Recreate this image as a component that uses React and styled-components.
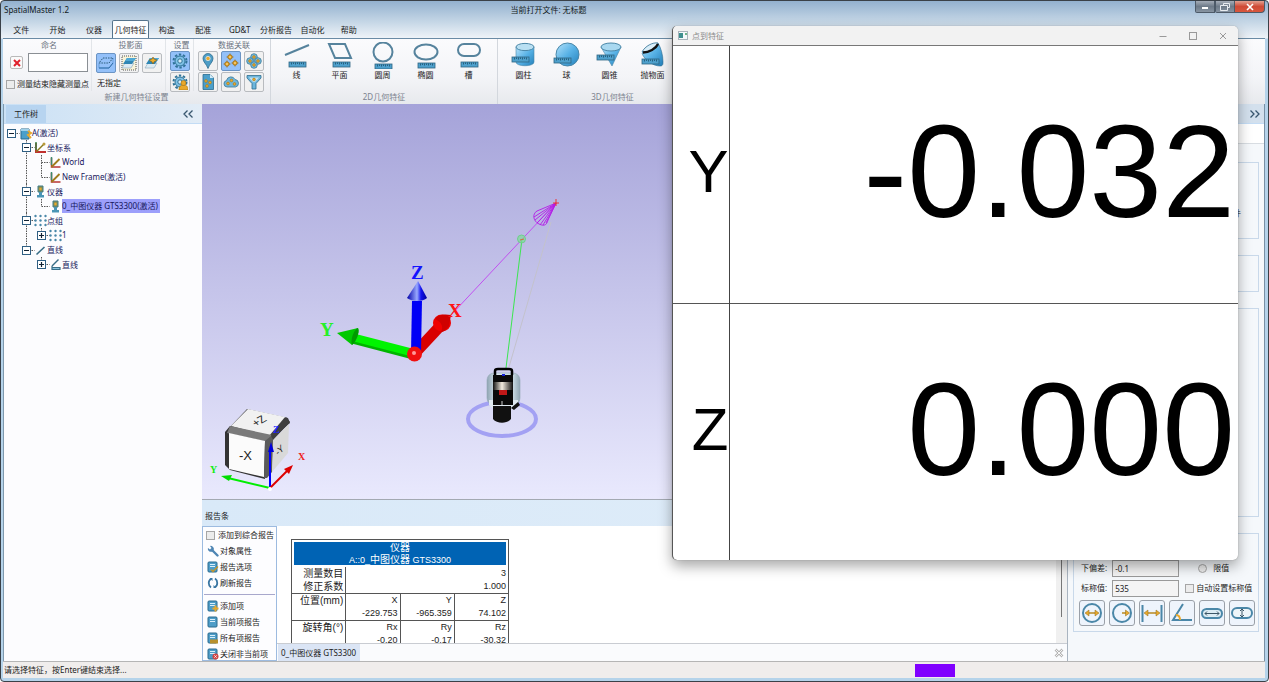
import styled, { createGlobalStyle, css } from "styled-components"

const GlobalStyle = createGlobalStyle`
  *,
  *::before,
  *::after {
    box-sizing: border-box;
  }
  body {
    margin: 0;
    font-family: "Noto Sans", "Noto Sans CJK SC", sans-serif;
    font-size: 8px;
    line-height: 12px;
    color: #1c1c1c;
  }
  button,
  input {
    font: inherit;
    color: inherit;
    margin: 0;
    padding: 0;
  }
  svg {
    display: block;
    flex: none;
  }
  ul {
    list-style: none;
    margin: 0;
    padding: 0;
  }
`

const BLUE = "#4a87a8"
const OUTLINE = "#56839d"
const GOLD = "#e9a92c"

/* ---------- small icons ---------- */

const Plane = ({ dashed, picked, star }) => (
  <svg width="16" height="16" viewBox="0 0 16 16">
    {dashed ? (
      <>
        <path d="M5 3h10l-4 5H1z" fill="none" stroke="#2d5d7c" strokeDasharray="1.5 1" />
        <path d="M1 8v5h10l4-5V3" fill="none" stroke="#4a87c8" strokeWidth=".6" />
        <path d="M1 13h10l4-5" fill="none" stroke="#2f6fa8" />
      </>
    ) : (
      <>
        {picked && <rect x="1" y="1" width="14" height="14" fill="#f8f3d8" stroke="#555" strokeDasharray="1 1" />}
        <path d="M4 8h9l-3 5H1z" fill="#dcebf4" stroke="#8aa6b8" strokeWidth=".6" />
        <path d="M6 3h9l-4 6H2z" fill="#2f86b4" />
        <path d="M6 3h9l-2 3H4z" fill="#4fa9d6" />
      </>
    )}
    {star && <path d="M9 2l1 2 3 1-3 2-1 2-1-2-3-2 3-1z" fill={GOLD} stroke="#7b5a12" strokeWidth=".6" />}
  </svg>
)

const Gear = ({ user }) => (
  <svg width="16" height="16" viewBox="0 0 16 16">
    <circle cx="8" cy="8" r="6.5" fill="none" stroke="#2f7397" strokeWidth="2" strokeDasharray="2.4 1.7" />
    <circle cx="8" cy="8" r="5" fill="#7fc2e6" stroke="#2f7397" />
    <circle cx="8" cy="8" r="2.2" fill="#d5ebf7" stroke="#2f7397" />
    {user && (
      <>
        <path d="M7 16c0-4 2-5 4.500-5s4.500 1 4.500 5z" fill={GOLD} stroke="#a87410" strokeWidth=".6" />
        <circle cx="11.5" cy="9" r="2.5" fill={GOLD} stroke="#a87410" strokeWidth=".6" />
      </>
    )}
  </svg>
)

const Dots = ({ at }) =>
  at.map(([x, y]) => <circle key={`${x}-${y}`} cx={x} cy={y} r="1.4" fill={GOLD} stroke="#9c6c10" strokeWidth=".5" />)

const PinIcon = () => (
  <svg width="16" height="16" viewBox="0 0 16 16">
    <path d="M8 15.500C6.500 11 3 9 3 5.500a5 5 0 0 1 10 0C13 9 9.500 11 8 15.500z" fill="#4d9dc6" stroke="#2f6d90" strokeWidth=".8" />
    <circle cx="8" cy="5.5" r="2.2" fill={GOLD} stroke="#d8e9f2" strokeWidth=".8" />
  </svg>
)

const TargetsIcon = () => (
  <svg width="16" height="16" viewBox="0 0 16 16" stroke="#9a6a12" strokeWidth=".8">
    {[[7, 4], [4, 11], [12, 10]].map(([x, y]) => (
      <g key={x}>
        <path d={`M${x - 3.5} ${y}h7M${x} ${y - 3.5}v7`} />
        <circle cx={x} cy={y} r="2.2" fill={GOLD} />
        <circle cx={x} cy={y} r=".7" fill="#fff3c4" stroke="none" />
      </g>
    ))}
  </svg>
)

const CloverIcon = () => (
  <svg width="16" height="16" viewBox="0 0 16 16">
    {[[8, 4], [4, 8], [12, 8], [8, 12]].map(([x, y]) => (
      <circle key={`${x}-${y}`} cx={x} cy={y} r="3.3" fill="#72bbdf" stroke="#3f7896" strokeWidth=".8" />
    ))}
    <Dots at={[[8, 4], [4, 8], [12, 8], [8, 12]]} />
  </svg>
)

const FileIcon = () => (
  <svg width="16" height="16" viewBox="0 0 16 16">
    <path d="M3 .5h7L13.500 4v11.500H3z" fill="#4b9fca" stroke="#2b6b8f" strokeWidth=".8" />
    <path d="M10 .5V4h3.500z" fill="#d5ecf8" />
    <Dots at={[[6, 7], [10, 8.5], [7, 12]]} />
  </svg>
)

const CloudIcon = () => (
  <svg width="16" height="16" viewBox="0 0 16 16">
    <path d="M4 13a3.300 3.300 0 0 1-.5-6.500A4.500 4.500 0 0 1 12 5.500 3.800 3.800 0 0 1 12.500 13z" fill="#6db6dc" stroke="#3f7896" strokeWidth=".8" />
    <Dots at={[[5, 9.5], [8.5, 6.5], [11.5, 10]]} />
  </svg>
)

const FunnelIcon = () => (
  <svg width="16" height="16" viewBox="0 0 16 16">
    <path d="M1 1.500h14V4L10 9.500V15H6V9.500L1 4z" fill="#6db6dc" stroke="#2f6d90" strokeWidth=".8" />
    <path d="M3 3.500h10L9 8H7z" fill="#c4e3f2" />
    <Dots at={[[8, 5.5]]} />
  </svg>
)

/* the ruler that sits under (or in front of) every feature icon */
const Ruler = ({ x, y }) => (
  <g transform={`translate(${x} ${y})`}>
    <rect width="17" height="5" fill="#4ea0cc" stroke="#2f6583" strokeWidth=".8" />
    <path d="M2.500 .5v2M4.500 .5v1.500M6.500 .5v2M8.500 .5v1.500M10.500 .5v2M12.500 .5v1.500M14.500 .5v2" stroke="#18465f" strokeWidth=".7" />
  </g>
)

const Solid = () => (
  <defs>
    <linearGradient id="solid" x1="0" y1="0" x2="1" y2="1">
      <stop offset="0" stopColor="#b6e2fa" />
      <stop offset=".5" stopColor="#58b2e6" />
      <stop offset="1" stopColor="#2380ba" />
    </linearGradient>
  </defs>
)

const featureShapes = {
  line: (
    <>
      <path d="M3 13L27 3" stroke={OUTLINE} strokeWidth="2" />
      <Ruler x={7} y={20} />
    </>
  ),
  plane: (
    <>
      <path d="M4 2h16l6 14H10z" fill="none" stroke={OUTLINE} strokeWidth="2" />
      <Ruler x={8} y={20} />
    </>
  ),
  circle: (
    <>
      <circle cx="15" cy="10" r="9.5" fill="none" stroke={OUTLINE} strokeWidth="2" />
      <Ruler x={7} y={22} />
    </>
  ),
  ellipse: (
    <>
      <ellipse cx="15" cy="10" rx="11.5" ry="7.5" fill="none" stroke={OUTLINE} strokeWidth="2" />
      <Ruler x={7} y={21} />
    </>
  ),
  slot: (
    <>
      <rect x="4" y="2" width="22" height="12" rx="6" fill="none" stroke={OUTLINE} strokeWidth="2" />
      <Ruler x={7} y={20} />
    </>
  ),
  cylinder: (
    <>
      <path d="M7 5v15c0 5 18 5 18 0V5z" fill="url(#solid)" stroke={BLUE} strokeWidth=".6" />
      <ellipse cx="16" cy="5" rx="9" ry="3.6" fill="#b9dff2" stroke={BLUE} />
      <Ruler x={3} y={15} />
    </>
  ),
  sphere: (
    <>
      <circle cx="15.5" cy="12.5" r="11.5" fill="url(#solid)" stroke={BLUE} />
      <Ruler x={2} y={16} />
    </>
  ),
  cone: (
    <>
      <path d="M6 5l11 19 9-19z" fill="url(#solid)" stroke={BLUE} strokeWidth=".6" />
      <ellipse cx="16" cy="5" rx="10" ry="4" fill="#a9d8f0" stroke={BLUE} />
      <Ruler x={2} y={13} />
    </>
  ),
  paraboloid: (
    <>
      <path d="M4 11c2 7 11 13 18 13 3 0 3-2 3-4 0-7-2-14-5-19z" fill="url(#solid)" stroke="#2f6d90" strokeWidth=".6" />
      <path d="M4 10C7 4 15 0 20 1c0 5-9 10-16 9z" fill="#d8edf8" stroke="#2f6d90" strokeWidth=".8" />
      <path d="M5 10.500c6 0 13-4 15-8.500" stroke="#111" strokeWidth="2.4" fill="none" />
      <Ruler x={4} y={17} />
    </>
  ),
}

/* ---------- data ---------- */

const menuTabs = ["文件", "开始", "仪器", "几何特征", "构造", "配准", "GD&T", "分析报告", "自动化", "帮助"]

const features2d = [
  ["line", "线"],
  ["plane", "平面"],
  ["circle", "圆周"],
  ["ellipse", "椭圆"],
  ["slot", "槽"],
]

const features3d = [
  ["cylinder", "圆柱"],
  ["sphere", "球"],
  ["cone", "圆锥"],
  ["paraboloid", "抛物面"],
]

// guides: one character per column left of the icon
// " " empty, "|" passing line, "t" branch, "l" last branch, "r" root
const treeRows = [
  { guides: "r", box: "-", icon: "project", text: "A(激活)" },
  { guides: " t", box: "-", icon: "frames", text: "坐标系" },
  { guides: " |t", icon: "frame", text: "World" },
  { guides: " |l", icon: "frame", text: "New Frame(激活)" },
  { guides: " t", box: "-", icon: "device", text: "仪器" },
  { guides: " |l", icon: "device", text: "0_中图仪器 GTS3300(激活)", selected: true },
  { guides: " t", box: "-", icon: "points", text: "点组" },
  { guides: " |l", box: "+", icon: "points", text: "1" },
  { guides: " l", box: "-", icon: "lineItem", text: "直线" },
  { guides: "  l", box: "+", icon: "angle", text: "直线" },
]

const treeIcons = {
  project: (
    <>
      <path d="M2 2h8v10H2z" fill="#4b9fca" stroke="#2b6b8f" />
      <path d="M2 2h8v2H2z" fill="#9fd0ea" />
      <path d="M9 4l3 2-3 2 3 3" stroke={GOLD} strokeWidth="2" fill="none" />
    </>
  ),
  frames: (
    <>
      <path d="M2 2v9h10" stroke="#c03030" strokeWidth="2" fill="none" />
      <path d="M2 11l8-8" stroke="#8a7a1c" strokeWidth="1.5" />
      <path d="M2 1v8" stroke="#3d8a4d" strokeWidth="1.5" />
      <circle cx="10" cy="3" r="1.5" fill="#b99a3a" />
    </>
  ),
  frame: (
    <>
      <path d="M2.500 2v9h9" stroke="#b83434" strokeWidth="1.5" fill="none" />
      <path d="M2.500 11l8-8" stroke="#a07c1c" strokeWidth="1.8" />
      <path d="M2.500 1v8" stroke="#3d8a6d" strokeWidth="1.5" />
    </>
  ),
  device: (
    <>
      <path d="M4 1h5v6H4z" fill="#8c8f52" stroke="#3f7d88" />
      <path d="M5 7h3v3H5zM3 10h7v2.500H3z" fill="#4a95b5" />
      <circle cx="6.5" cy="4" r="1.2" fill={GOLD} />
    </>
  ),
  points: [2, 6.5, 11].flatMap((y) =>
    [1.5, 6.5, 11.5].map((x) => <circle key={`${x}-${y}`} cx={x} cy={y} r="1.2" fill={BLUE} />)
  ),
  lineItem: <path d="M2.500 10.500L10.500 3" stroke="#386d86" strokeWidth="1.6" />,
  angle: (
    <>
      <path d="M9.500 1.500L3 8" stroke="#386d86" strokeWidth="1.4" />
      <path d="M3 8v3.500h8V9.500H3" stroke="#386d86" strokeWidth="1.2" fill="#8ac4e0" />
    </>
  ),
}

const Guide = ({ kind, box }) => (
  <svg width="15" height="15" viewBox="0 0 15 15" overflow="visible">
    <g stroke="#555" strokeDasharray="1.5 1">
      {(kind === "|" || kind === "t") && <path d="M7.500 0v15" />}
      {kind === "l" && <path d="M7.500 0v7.500" />}
      {kind !== "|" && kind !== " " && <path d="M7.500 7.500h8" />}
    </g>
    {box && (
      <g stroke="#2f5f83">
        <rect x="3.5" y="3.5" width="8" height="8" fill="#fff" />
        <path d={box === "+" ? "M5 7.500h5M7.500 5v5" : "M5 7.500h5"} stroke="#123" strokeWidth="1.2" />
      </g>
    )}
  </svg>
)

const sheet = (
  <>
    <rect x="1" y="1" width="9" height="10" rx="1" fill="#4e9dc8" stroke="#2b6b8f" />
    <path d="M3 3.500h5M3 5.500h5" stroke="#d9eefa" />
  </>
)

const reportIcons = {
  wrench: (
    <>
      <path d="M5 5l5.500 5.500" stroke="#4f86b4" strokeWidth="2.4" strokeLinecap="round" />
      <path d="M1 3l2 1.500L4.500 3 3 1a3 3 0 1 1-2 2z" fill="#4f86b4" />
    </>
  ),
  options: (
    <>
      {sheet}
      <path d="M4 8.500l2 2 5-5" stroke="#c4942a" strokeWidth="1.5" fill="none" />
    </>
  ),
  refresh: (
    <>
      <path d="M4 2C1 3.500 1 8.500 4 10.500M8 10C11 8.500 11 3.500 8 1.500" stroke="#3a76a2" strokeWidth="1.8" fill="none" />
      <path d="M2.500 1h3v3zM9.500 11h-3V8z" fill="#3a76a2" />
    </>
  ),
  add: (
    <>
      {sheet}
      <path d="M8.500 5.500v6M5.500 8.500h6" stroke={GOLD} strokeWidth="2" />
    </>
  ),
  current: sheet,
  all: (
    <>
      {sheet}
      <rect x="3" y="7.5" width="8" height="4" fill="#b8902c" />
    </>
  ),
  close: (
    <>
      {sheet}
      <circle cx="8.5" cy="8.5" r="3" fill="#d24545" />
      <path d="M7.300 7.300l2.400 2.400M9.700 7.300L7.300 9.700" stroke="#fff" strokeWidth=".8" />
    </>
  ),
}

const measureIcons = {
  diameter: (
    <>
      <circle cx="11" cy="11" r="9" fill="none" stroke={BLUE} strokeWidth="2" />
      <path d="M6 11h10" stroke="#b98a20" strokeWidth="1.6" />
      <path d="M4 11l4-3v6zM18 11l-4-3v6z" fill={GOLD} stroke="#8d6a18" strokeWidth=".5" />
    </>
  ),
  radius: (
    <>
      <circle cx="11" cy="11" r="9" fill="none" stroke={BLUE} strokeWidth="2" />
      <path d="M11 11h5" stroke="#b98a20" strokeWidth="1.6" />
      <path d="M18.500 11l-4-3v6z" fill={GOLD} stroke="#8d6a18" strokeWidth=".5" />
    </>
  ),
  distance: (
    <>
      <path d="M1.500 3v17M20.500 3v17" stroke={BLUE} strokeWidth="2" />
      <path d="M6 11h10" stroke="#b98a20" strokeWidth="1.6" />
      <path d="M3 11l4-3v6zM19 11l-4-3v6z" fill={GOLD} stroke="#8d6a18" strokeWidth=".5" />
    </>
  ),
  angle: (
    <>
      <path d="M12 2L2 18h19" fill="none" stroke={BLUE} strokeWidth="2" />
      <path d="M5 13c3 0 4 2 4 5" stroke={GOLD} strokeWidth="2" fill="none" />
    </>
  ),
  slotLength: (
    <>
      <rect x="1" y="7" width="20" height="9" rx="4.5" fill="#dcecf4" stroke={BLUE} strokeWidth="2" />
      <path d="M4 11.500h14M6 9.500l-2 2 2 2M16 9.500l2 2-2 2" stroke="#3c5666" fill="none" />
    </>
  ),
  slotWidth: (
    <>
      <rect x="1" y="6" width="20" height="10" rx="5" fill="#eef5f9" stroke={BLUE} strokeWidth="2" />
      <path d="M11 7v8M9 9l2-2 2 2M9 13l2 2 2-2" stroke="#3c5666" fill="none" />
    </>
  ),
}

const reportTools = [
  ["wrench", "对象属性"],
  ["options", "报告选项"],
  ["refresh", "刷新报告"],
]

const reportItems = [
  ["add", "添加项"],
  ["current", "当前项报告"],
  ["all", "所有项报告"],
  ["close", "关闭非当前项"],
]

/* ---------- 3D view ---------- */

const Scene = () => (
  <SceneSvg width="470" height="396" viewBox="202 104 470 396">
    <defs>
      <linearGradient id="blueCone">
        <stop offset="0" stopColor="#00a" />
        <stop offset=".5" stopColor="#9aaaff" />
        <stop offset=".7" stopColor="#11e" />
        <stop offset="1" stopColor="#009" />
      </linearGradient>
      <linearGradient id="lens">
        <stop offset="0" stopColor="#111" />
        <stop offset=".45" stopColor="#f3ece0" />
        <stop offset="1" stopColor="#111" />
      </linearGradient>
      <linearGradient id="shell">
        <stop offset="0" stopColor="#8fa5b3" />
        <stop offset=".3" stopColor="#dbe8f0" />
        <stop offset=".8" stopColor="#c5d6e0" />
        <stop offset="1" stopColor="#90a6b4" />
      </linearGradient>
    </defs>

    {/* measured line */}
    <path d="M452 314L556 203" stroke="#c050f0" />
    <path d="M551 222L509 367" stroke="#c3c2cc" />
    <path d="M522 239L506 368" stroke="#3be650" />
    <circle cx="521.5" cy="239" r="4" fill="#7fdc9a" fillOpacity=".7" stroke="#6fcf8c" />
    <path d="M520 240l4-1" stroke="#d66a3a" />
    <g stroke="#b31ae6" strokeWidth=".9" fill="none">
      <path d="M556 203L537 211C532 214 533 221 539 224s8 0 9-4z" />
      <path d="M556 203l-22 14M556 203l-21 17M556 203l-19 20M556 203l-16 22M556 203l-13 22M556 203l-10 20" />
    </g>
    <path d="M553 203h6M556 199v7" stroke="#e33" />

    {/* coordinate frame */}
    <path d="M413 355L352 339" stroke="#00b400" strokeWidth="9" />
    <path d="M414 353L352 337" stroke="#00f400" strokeWidth="8" />
    <path d="M337 333l21-5c2 4-2 14-6 17z" fill="#00c800" />
    <path d="M352 345c4-3 8-13 6-17-4 1-8 12-6 17z" fill="#009a00" />
    <path d="M416 352l27-29" stroke="#d90000" strokeWidth="11" />
    <ellipse cx="442" cy="323" rx="9" ry="8.5" fill="#f00000" />
    <path d="M435 319c4-5 10-5 16-4l-2 11c-4 5-6 6-8 6 3-6 0-10-6-13z" fill="#d00000" />
    <path d="M416 352l1-51" stroke="#0000f6" strokeWidth="10" />
    <path d="M418 281l9 17c-4 4-15 4-20 0z" fill="url(#blueCone)" />
    <circle cx="414.5" cy="354" r="7.5" fill="#f01010" />
    <circle cx="414" cy="353" r="2" fill="#ff9a9a" />
    <AxisText x="411" y="279" fill="#1414ff">Z</AxisText>
    <AxisText x="448" y="317" fill="#ff1414">X</AxisText>
    <AxisText x="320" y="336" fill="#28f028">Y</AxisText>

    {/* laser tracker */}
    <ellipse cx="502" cy="419" rx="34" ry="17" fill="none" stroke="#a3a1f3" strokeWidth="4" />
    <rect x="487" y="373" width="33" height="32" rx="7" fill="url(#shell)" stroke="#93a8b5" strokeWidth=".6" />
    <path d="M489 400h29v5l-4 4h-20l-5-4z" fill="#dfe9f0" />
    <path d="M495 375v-4q0-2 3-2h11q3 0 3 2v4" fill="none" stroke="#000" strokeWidth="2.5" />
    <path d="M493 375h20v30h-20z" fill="#0a0a0a" />
    <path d="M493 382h20v8h-20z" fill="url(#lens)" />
    <path d="M499 390h8v5h-8z" fill="#c01818" />
    <path d="M502 401v4" stroke="#ccc" />
    <path d="M493 406h18v13c-4 5-14 5-18 0z" fill="#111" />
    <path d="M511 408l7-6 2 3-6 5z" fill="#111" />
    <path d="M502 374h3v2h-3z" fill="#1520d8" />

    {/* view cube */}
    <g strokeLinejoin="round">
      <path d="M225 432l5-6 38 10-3 43-35-9-5-5z" fill="#333" />
      <path d="M229 428l18-19 41 9 2 5-20 18z" fill="#444" />
      <path d="M231 426l17-17 37 8-16 19z" fill="#f1f1f1" />
      <path d="M227 433l3-7 42 9-4 7z" fill="#7a7a7a" />
      <path d="M229 433l36 8-1 36-35-8z" fill="#fbfbfb" />
      <path d="M265 441l6-5 3 5-2 31-5 6h-3z" fill="#5b5b5b" />
      <path d="M273 440l16-16-1 29-16 19z" fill="#d9d9d9" />
      <path d="M271 435l15-18 4 5-17 18z" fill="#3f3f3f" />
    </g>
    <CubeText x="239" y="460" fontSize="13">-X</CubeText>
    <CubeText fontSize="11" transform="translate(256 427) rotate(-30) skewX(15)">+Z</CubeText>
    <CubeText fontSize="9" transform="translate(278 456) rotate(-45) skewX(-15)">-Y</CubeText>
    <path d="M270 488V449" stroke="#00f" strokeWidth="2" />
    <path d="M271 442l3 10h-6z" fill="#00d" />
    <path d="M270 488l-42-10" stroke="#0e0" strokeWidth="2" />
    <path d="M221 476l11-1-3 6z" fill="#0d0" />
    <path d="M270 488l18-18" stroke="#d00" strokeWidth="2" />
    <path d="M293 465l-4 9-5-5z" fill="#d00" />
    <circle cx="270" cy="489" r="2" fill="#fff" />
    <SmallAxis x="273" y="433" fill="#22f">Z</SmallAxis>
    <SmallAxis x="298" y="460" fill="#e22">X</SmallAxis>
    <SmallAxis x="210" y="473" fill="#1e1">Y</SmallAxis>
  </SceneSvg>
)

/* ---------- parts ---------- */

const Ribbon = () => (
  <RibbonBar>
    <RibbonSection $width={268}>
      <RibbonBody>
        <Group $width={89}>
          <GroupTitle>命名</GroupTitle>
          <NameRow>
            <ClearButton type="button" aria-label="清除">
              <svg width="8" height="8" viewBox="0 0 8 8">
                <path d="M1 1l6 6M7 1L1 7" stroke="#e0202c" strokeWidth="2" />
              </svg>
            </ClearButton>
            <NameInput type="text" aria-label="命名" />
          </NameRow>
          <CheckLabel>
            <Check type="checkbox" />
            测量结束隐藏测量点
          </CheckLabel>
        </Group>
        <Group $width={74}>
          <GroupTitle>投影面</GroupTitle>
          <ButtonGrid $cols={3} $top>
            <ToolButton type="button" aria-label="无投影面" $active><Plane dashed /></ToolButton>
            <ToolButton type="button" aria-label="选择平面"><Plane picked /></ToolButton>
            <ToolButton type="button" aria-label="新建平面"><Plane star /></ToolButton>
          </ButtonGrid>
          <PlaneName>无指定</PlaneName>
        </Group>
        <Group $width={28}>
          <GroupTitle>设置</GroupTitle>
          <ButtonGrid $cols={1}>
            <ToolButton type="button" aria-label="设置" $active><Gear /></ToolButton>
            <ToolButton type="button" aria-label="用户设置"><Gear user /></ToolButton>
          </ButtonGrid>
        </Group>
        <Group $width={76}>
          <GroupTitle>数据关联</GroupTitle>
          <ButtonGrid $cols={3}>
            <ToolButton type="button" aria-label="定位点"><PinIcon /></ToolButton>
            <ToolButton type="button" aria-label="目标点" $active><TargetsIcon /></ToolButton>
            <ToolButton type="button" aria-label="点组"><CloverIcon /></ToolButton>
            <ToolButton type="button" aria-label="文件"><FileIcon /></ToolButton>
            <ToolButton type="button" aria-label="点云"><CloudIcon /></ToolButton>
            <ToolButton type="button" aria-label="过滤"><FunnelIcon /></ToolButton>
          </ButtonGrid>
        </Group>
      </RibbonBody>
      <Caption>新建几何特征设置</Caption>
    </RibbonSection>
    <FeatureSection width={227} items={features2d} caption="2D几何特征" />
    <FeatureSection width={230} items={features3d} caption="3D几何特征" />
  </RibbonBar>
)

const FeatureSection = ({ width, items, caption }) => (
  <RibbonSection $width={width}>
    <FeatureBody>
      {items.map(([shape, label]) => (
        <Feature key={shape} type="button">
          <svg width="30" height="27" viewBox="0 0 30 27">
            <Solid />
            {featureShapes[shape]}
          </svg>
          {label}
        </Feature>
      ))}
    </FeatureBody>
    <Caption>{caption}</Caption>
  </RibbonSection>
)

const WorkTree = () => (
  <TreePanel>
    <PanelHead>
      <HeadTab>工作树</HeadTab>
      <Chevron type="button" aria-label="收起">
        <svg width="12" height="8" viewBox="0 0 12 8">
          <path d="M5.500 .5L2 4l3.500 3.500M10.500 .5L7 4l3.500 3.500" fill="none" stroke="#38566e" strokeWidth="1.3" />
        </svg>
      </Chevron>
    </PanelHead>
    <Tree>
      {treeRows.map(({ guides, box, icon, text, selected }, i) => (
        <TreeRow key={i}>
          {guides.split("").map((kind, n) => (
            <Guide key={n} kind={kind} box={n === guides.length - 1 ? box : undefined} />
          ))}
          <svg width="13" height="13" viewBox="0 0 13 13" overflow="visible">
            {treeIcons[icon]}
          </svg>
          <TreeText $selected={selected}>{text}</TreeText>
        </TreeRow>
      ))}
    </Tree>
  </TreePanel>
)

const ReportTool = ({ icon, text }) => (
  <ReportButton type="button">
    <svg width="12" height="12" viewBox="0 0 12 12">
      {reportIcons[icon]}
    </svg>
    {text}
  </ReportButton>
)

const Report = () => (
  <ReportPanel>
    <ReportHead>报告条</ReportHead>
    <ReportMain>
      <ReportSide>
        <CheckLabel $side>
          <Check type="checkbox" />
          添加到综合报告
        </CheckLabel>
        {reportTools.map(([icon, text]) => (
          <ReportTool key={icon} icon={icon} text={text} />
        ))}
        <Divider />
        {reportItems.map(([icon, text]) => (
          <ReportTool key={icon} icon={icon} text={text} />
        ))}
      </ReportSide>
      <ReportView>
        <ReportScroll>
          <ReportPage>
            <ReportTable>
              <caption>
                <big>仪器</big>
                <br />
                A::0_<big>中图仪器</big> GTS3300
              </caption>
              <tbody>
                <tr>
                  <th scope="row">测量数目</th>
                  <td colSpan="3">3</td>
                </tr>
                <tr>
                  <th scope="row">修正系数</th>
                  <td colSpan="3">1.000</td>
                </tr>
                <tr className="line">
                  <th scope="row">位置(mm)</th>
                  <td>X</td>
                  <td>Y</td>
                  <td>Z</td>
                </tr>
                <tr>
                  <th />
                  <td>-229.753</td>
                  <td>-965.359</td>
                  <td>74.102</td>
                </tr>
                <tr className="line">
                  <th scope="row">旋转角(°)</th>
                  <td>Rx</td>
                  <td>Ry</td>
                  <td>Rz</td>
                </tr>
                <tr>
                  <th />
                  <td>-0.20</td>
                  <td>-0.17</td>
                  <td>-30.32</td>
                </tr>
              </tbody>
            </ReportTable>
          </ReportPage>
          <ScrollTrack>
            <ScrollThumb />
          </ScrollTrack>
        </ReportScroll>
        <ReportTabs>
          <ReportTab type="button">0_中图仪器 GTS3300</ReportTab>
          <CloseTab type="button" aria-label="关闭">
            <svg width="10" height="10" viewBox="0 0 10 10">
              <path d="M1.500 1.500l7 7M8.500 1.500l-7 7" stroke="#b4b4b4" strokeWidth="2.6" />
              <path d="M1.500 1.500l7 7M8.500 1.500l-7 7" stroke="#f6f6f6" />
            </svg>
          </CloseTab>
        </ReportTabs>
      </ReportView>
    </ReportMain>
  </ReportPanel>
)

const Properties = () => (
  <SidePanel>
    <PanelHead $right>
      <Chevron type="button" aria-label="展开">
        <svg width="12" height="8" viewBox="0 0 12 8">
          <path d="M1.500 .5L5 4 1.500 7.500M6.500 .5L10 4 6.500 7.500" fill="none" stroke="#38566e" strokeWidth="1.3" />
        </svg>
      </Chevron>
    </PanelHead>
    <SideStrip />
    <SideBody>
      <Box $height={77}>
        <BoxNote>件</BoxNote>
      </Box>
      <Box $height={37} />
      <Box $height={209} />
      <Box $height={99}>
        <Field>
          <label htmlFor="lower">下偏差:</label>
          <FieldInput id="lower" type="text" defaultValue="-0.1" />
          <Option $radio>
            <Radio type="radio" name="limit" />
            限值
          </Option>
        </Field>
        <Field>
          <label htmlFor="nominal">标称值:</label>
          <FieldInput id="nominal" type="text" defaultValue="535" />
          <Option>
            <Check type="checkbox" />
            自动设置标称值
          </Option>
        </Field>
        <Measures>
          {Object.entries(measureIcons).map(([name, icon]) => (
            <MeasureButton key={name} type="button" aria-label={name}>
              <svg width="22" height="22" viewBox="0 0 22 22">
                {icon}
              </svg>
            </MeasureButton>
          ))}
        </Measures>
      </Box>
    </SideBody>
  </SidePanel>
)

const PointDialog = () => (
  <Dialog role="dialog" aria-label="点到特征">
    <DialogBar>
      <svg width="10" height="9" viewBox="0 0 10 9">
        <rect x=".5" y=".5" width="9" height="8" fill="#f4f8fa" stroke="#a9b4bc" />
        <path d="M1 2h4v5H1z" fill="#3f8f8f" />
        <path d="M7 2h2v2H7z" fill="#6fb58a" />
      </svg>
      <DialogTitle>点到特征</DialogTitle>
      <DialogButton type="button" aria-label="最小化">
        <svg width="8" height="8" viewBox="0 0 8 8"><path d="M.5 4.500h7" stroke="#999" /></svg>
      </DialogButton>
      <DialogButton type="button" aria-label="最大化">
        <svg width="8" height="8" viewBox="0 0 8 8"><rect x=".5" y=".5" width="7" height="7" fill="none" stroke="#999" /></svg>
      </DialogButton>
      <DialogButton type="button" aria-label="关闭">
        <svg width="8" height="8" viewBox="0 0 8 8"><path d="M1 1l6 6M7 1L1 7" stroke="#999" /></svg>
      </DialogButton>
    </DialogBar>
    <Readout>
      <tbody>
        <tr>
          <th scope="row">Y</th>
          <td>-0.032</td>
        </tr>
        <tr>
          <th scope="row">Z</th>
          <td>0.000</td>
        </tr>
      </tbody>
    </Readout>
  </Dialog>
)

const App = () => (
  <>
    <GlobalStyle />
    <Window>
      <TitleBar>
        <AppName>SpatialMaster 1.2</AppName>
        <FileName>当前打开文件: 无标题</FileName>
        <WindowButtons>
          <WindowButton type="button" aria-label="最小化">
            <svg width="8" height="8" viewBox="0 0 8 8"><path d="M1 5h6" stroke="#fff" strokeWidth="2" /></svg>
          </WindowButton>
          <WindowButton type="button" aria-label="还原">
            <svg width="10" height="8" viewBox="0 0 10 8">
              <path d="M3.500 2.500v-2h6v4h-2M.5 2.500h7v5h-7z" fill="none" stroke="#e8ecf0" />
            </svg>
          </WindowButton>
          <WindowButton type="button" aria-label="关闭" $close>
            <svg width="8" height="8" viewBox="0 0 8 8"><path d="M1 1l6 6M7 1L1 7" stroke="#fff" strokeWidth="1.6" /></svg>
          </WindowButton>
        </WindowButtons>
      </TitleBar>
      <Tabs>
        {menuTabs.map((tab) => (
          <Tab key={tab} type="button" $active={tab === "几何特征"}>
            {tab}
          </Tab>
        ))}
      </Tabs>
      <Ribbon />
      <Main>
        <WorkTree />
        <Center>
          <View>
            <Scene />
          </View>
          <Report />
        </Center>
        <Properties />
      </Main>
      <StatusBar>
        请选择特征，按Enter键结束选择...
        <Progress />
      </StatusBar>
    </Window>
    <PointDialog />
  </>
)

export default App

/* ---------- styles ---------- */

const Window = styled.div`
  display: flex;
  flex-direction: column;
  height: 100vh;
  overflow: hidden;
  padding: 0 3px 3px 2px;
  border: 1px solid #3a4148;
  border-radius: 4px;
  background: linear-gradient(#93b1cf, #c3d5e5 20px, #eef3f8 37px, #b5d3ea 38px);
`

const TitleBar = styled.header`
  display: flex;
  align-items: flex-start;
  height: 18px;
  color: #101820;
`

const AppName = styled.div`
  flex: 1;
  padding: 3px 0 0 1px;
`

const FileName = styled.div`
  padding-top: 3px;
`

const WindowButtons = styled.div`
  flex: 1;
  display: flex;
  justify-content: flex-end;
  margin-left: 172px;
`

const WindowButton = styled.button`
  display: flex;
  align-items: center;
  justify-content: center;
  width: ${(p) => (p.$close ? 30 : 20)}px;
  height: 12px;
  border: 1px solid #4d5a68;
  border-top: none;
  border-left-width: ${(p) => (p.$close ? 0 : 1)}px;
  border-radius: ${(p) => (p.$close ? "0 0 4px 0" : "0 0 0 2px")};
  background: ${(p) =>
    p.$close ? "linear-gradient(#e3a090, #cf4a36 50%, #d8573e)" : "linear-gradient(#a5adb8, #6d7a88 50%, #8794a2)"};
`

const Tabs = styled.nav`
  display: flex;
  width: 364px;
  height: 19px;
  padding-top: 1px;
`

const Tab = styled.button`
  flex: 1 1 0;
  min-width: 0;
  border: 1px solid transparent;
  border-bottom: none;
  background: none;
  white-space: nowrap;
  ${(p) =>
    p.$active &&
    css`
      border-color: #54738c;
      border-radius: 2px 2px 0 0;
      background: #fcfdfe;
    `}
`

const RibbonBar = styled.div`
  display: flex;
  height: 66px;
  border-top: 1px solid #6a8ba5;
  background: linear-gradient(#fbfbfd, #f3f4f7 60%, #e7e9ed);
`

const RibbonSection = styled.section`
  display: flex;
  flex: none;
  flex-direction: column;
  width: ${(p) => p.$width}px;
  border-right: 1px solid #d3d7dd;
`

const RibbonBody = styled.div`
  display: flex;
  height: 52px;
`

const Group = styled.div`
  display: flex;
  flex: none;
  flex-direction: column;
  width: ${(p) => p.$width}px;
  border-right: 1px solid #e2e5e9;
  &:last-child {
    border-right: none;
  }
`

const GroupTitle = styled.div`
  padding-left: 4px;
  text-align: center;
  color: #6c7480;
`

const Caption = styled.div`
  text-align: center;
  color: #7c838f;
`

const NameRow = styled.div`
  display: flex;
  align-items: center;
  gap: 5px;
  padding: 2px 0 0 7px;
`

const ClearButton = styled.button`
  display: flex;
  align-items: center;
  justify-content: center;
  width: 13px;
  height: 13px;
  border: 1px solid #b9b9b9;
  border-radius: 2px;
  background: #fafafa;
`

const NameInput = styled.input`
  width: 60px;
  height: 19px;
  border: 1px solid #8a8f94;
  background: #fff;
`

const Check = styled.input`
  appearance: none;
  flex: none;
  width: 9px;
  height: 9px;
  border: 1px solid #a6a6a6;
  background: #ececec;
`

const Radio = styled(Check)`
  border-radius: 50%;
`

const CheckLabel = styled.label`
  display: flex;
  align-items: center;
  gap: ${(p) => (p.$side ? 3 : 2)}px;
  height: 16px;
  padding-left: 3px;
  margin-top: ${(p) => (p.$side ? 0 : 5)}px;
  white-space: nowrap;
`

const ButtonGrid = styled.div`
  display: grid;
  grid-template-columns: repeat(${(p) => p.$cols}, 20px);
  gap: 1px 3px;
  padding: ${(p) => (p.$top ? 2 : 0)}px 0 0 4px;
`

const ToolButton = styled.button`
  display: flex;
  align-items: center;
  justify-content: center;
  width: 20px;
  height: 20px;
  border: 1px solid ${(p) => (p.$active ? "#6b94c4" : "#b8bbbf")};
  border-radius: 2px;
  background: ${(p) => (p.$active ? "#93c0f9" : "#f1f1f1")};
`

const PlaneName = styled.div`
  padding: 4px 0 0 5px;
`

const FeatureBody = styled.div`
  display: flex;
  height: 52px;
  padding: 3px 0 0 4px;
`

const Feature = styled.button`
  display: flex;
  flex-direction: column;
  align-items: center;
  justify-content: flex-start;
  width: 43px;
  height: 40px;
  border: none;
  background: none;
`

const Main = styled.main`
  display: flex;
  flex: 1;
  min-height: 0;
`

const TreePanel = styled.aside`
  width: 199px;
  background: #fcfcfe;
  border-left: 1px solid #7f99ad;
`

const PanelHead = styled.div`
  display: flex;
  align-items: center;
  justify-content: ${(p) => (p.$right ? "flex-end" : "space-between")};
  height: 20px;
  padding: 0 ${(p) => (p.$right ? 1 : 6)}px 0 2px;
  background: ${(p) => (p.$right ? "#d3e0ed" : "linear-gradient(90deg, #cbe1f5, #e2ecf6)")};
  border-bottom: 1px solid #c3dcf5;
`

const HeadTab = styled.div`
  padding: 3px 8px;
  background: #b7d4f0;
`

const Chevron = styled.button`
  padding: 2px;
  border: none;
  background: none;
`

const Tree = styled.ul`
  display: flex;
  flex-direction: column;
  height: 146px;
  margin-top: 2px;
`

const TreeRow = styled.li`
  display: flex;
  flex: 1;
  min-height: 0;
  align-items: center;
`

const TreeText = styled.span`
  padding: 1px 2px 1px 0;
  white-space: nowrap;
  color: #16165c;
  background: ${(p) => (p.$selected ? "#9c9ffb" : "none")};
`

const Center = styled.div`
  display: flex;
  flex: 1;
  flex-direction: column;
  min-width: 0;
`

const View = styled.div`
  flex: 1;
  min-height: 0;
  overflow: hidden;
  background: linear-gradient(#a5a3d9, #e9e9fd);
`

const SceneSvg = styled.svg`
  overflow: visible;
`

const AxisText = styled.text`
  font-family: "Liberation Serif", serif;
  font-size: 19px;
  font-weight: 700;
`

const SmallAxis = styled.text`
  font-family: "Liberation Serif", serif;
  font-size: 10px;
  font-weight: 700;
`

const CubeText = styled.text`
  font-family: "Liberation Sans", sans-serif;
  fill: #222;
`

const ReportPanel = styled.section`
  display: flex;
  flex-direction: column;
  height: 162px;
  border-top: 1px solid #a3a9b2;
`

const ReportHead = styled.div`
  height: 26px;
  padding: 10px 0 0 3px;
  background: linear-gradient(90deg, #d9e9f8, #e0edf9);
`

const ReportMain = styled.div`
  display: flex;
  flex: 1;
  min-height: 0;
  background: #fff;
`

const ReportSide = styled.div`
  width: 75px;
  border: 1px solid #9dbbe0;
  background: #fdfdff;
`

const ReportButton = styled.button`
  display: flex;
  align-items: center;
  gap: 1px;
  width: 100%;
  height: 16px;
  padding-left: 4px;
  border: none;
  background: none;
  white-space: nowrap;
`

const Divider = styled.hr`
  height: 1px;
  margin: 3px 1px;
  border: none;
  background: #a8a8cc;
`

const ReportView = styled.div`
  display: flex;
  flex: 1;
  flex-direction: column;
  min-width: 0;
`

const ReportScroll = styled.div`
  display: flex;
  flex: 1;
  min-height: 0;
`

const ReportPage = styled.div`
  flex: 1;
  overflow: hidden;
  padding: 13px 0 0 14px;
`

const ReportTable = styled.table`
  width: 218px;
  table-layout: fixed;
  border-collapse: collapse;
  border: 1px solid #555;
  border-top: none;
  font-family: "Liberation Sans", "Noto Sans CJK SC", sans-serif;
  font-size: 9px;
  line-height: 13px;
  caption {
    padding: 2px 0 1px;
    border: 1px solid #555;
    border-bottom: none;
    background: #0063b4;
    box-shadow: inset 0 0 0 2px #fff;
    color: #fff;
    line-height: 12px;
  }
  big {
    font-size: 10px;
    line-height: 1;
  }
  th,
  td {
    height: 13px;
    padding: 0 2px;
    text-align: right;
    font-weight: 400;
    white-space: nowrap;
    border-left: 1px solid #555;
  }
  th {
    font-size: 10px;
  }
  .line {
    border-top: 1px solid #555;
  }
`

const ScrollTrack = styled.div`
  display: flex;
  justify-content: center;
  width: 11px;
  background: #f0f0f0;
`

const ScrollThumb = styled.div`
  width: 1px;
  height: 91px;
  background: #777;
`

const ReportTabs = styled.div`
  display: flex;
  justify-content: space-between;
  height: 18px;
  padding-left: 1px;
  border-top: 1px solid #c9ccd2;
  background: #fafbfd;
`

const ReportTab = styled.button`
  padding: 0 4px 0 3px;
  border: none;
  background: #dbe5f5;
`

const CloseTab = styled.button`
  padding: 0 3px;
  border: none;
  background: none;
`

const SidePanel = styled.aside`
  display: flex;
  flex-direction: column;
  width: 198px;
  border-left: 1px solid #a9b4c0;
  border-right: 1px solid #7890a5;
  background: #f5f8fb;
`

const SideStrip = styled.div`
  height: 20px;
  border-bottom: 1px solid #d8dde2;
  background: #fff;
`

const SideBody = styled.div`
  display: flex;
  flex-direction: column;
  gap: 16px;
  padding: 18px 5px 0 5px;
`

const Box = styled.div`
  display: flex;
  flex: none;
  flex-direction: column;
  justify-content: flex-end;
  height: ${(p) => p.$height}px;
  padding: 0 4px 5px 5px;
  border: 1px solid #c9d9ea;
`

const BoxNote = styled.div`
  padding: 0 13px 14px 0;
  text-align: right;
`

const Field = styled.div`
  display: flex;
  align-items: center;
  gap: 5px;
  height: 20px;
  padding-left: 2px;
  white-space: nowrap;
`

const FieldInput = styled.input`
  width: 67px;
  height: 17px;
  padding-left: 2px;
  border: 1px solid #9a9a9a;
  background: #f4f4f4;
`

const Option = styled.label`
  display: flex;
  align-items: center;
  gap: ${(p) => (p.$radio ? 6 : 2)}px;
  padding-left: ${(p) => (p.$radio ? 14 : 1)}px;
`

const Measures = styled.div`
  display: flex;
  gap: 4px;
  margin-top: 2px;
`

const MeasureButton = styled.button`
  display: flex;
  flex: none;
  align-items: center;
  justify-content: center;
  width: 26px;
  height: 26px;
  border: 1px solid #9aa0a8;
  border-radius: 3px;
  background: #eef4fc;
`

const StatusBar = styled.footer`
  display: flex;
  align-items: center;
  justify-content: space-between;
  height: 17px;
  padding: 0 310px 0 1px;
  border-top: 1px solid #b5b5b5;
  background: #f0edec;
`

const Progress = styled.div`
  width: 40px;
  height: 13px;
  background: #8000ff;
`

const Dialog = styled.div`
  position: absolute;
  top: 26px;
  left: 672px;
  display: flex;
  flex-direction: column;
  width: 566px;
  overflow: hidden;
  border-left: 1px solid #555;
  border-radius: 5px;
  background: #fff;
  box-shadow: 0 0 1px #777, 0 6px 14px rgba(0, 0, 0, 0.35);
`

const DialogBar = styled.div`
  display: flex;
  align-items: center;
  height: 20px;
  padding-left: 5px;
  border-bottom: 1px solid #777;
  background: #f2f2f2;
`

const DialogTitle = styled.div`
  flex: 1;
  padding-left: 4px;
  color: #8b8b8b;
`

const DialogButton = styled.button`
  display: flex;
  align-items: center;
  justify-content: center;
  width: 30px;
  height: 18px;
  border: none;
  background: none;
`

const Readout = styled.table`
  width: 100%;
  table-layout: fixed;
  border-collapse: collapse;
  font-family: "Liberation Sans", sans-serif;
  color: #000;
  tr {
    height: 257px;
  }
  tr + tr {
    border-top: 1px solid #555;
  }
  th {
    width: 56px;
    padding: 0 0 4px;
    border-right: 1px solid #444;
    text-align: right;
    font-size: 60px;
    line-height: 72px;
    font-weight: 400;
  }
  td {
    padding: 0 3px 4px 0;
    text-align: right;
    font-size: 131px;
    line-height: 150px;
  }
`
